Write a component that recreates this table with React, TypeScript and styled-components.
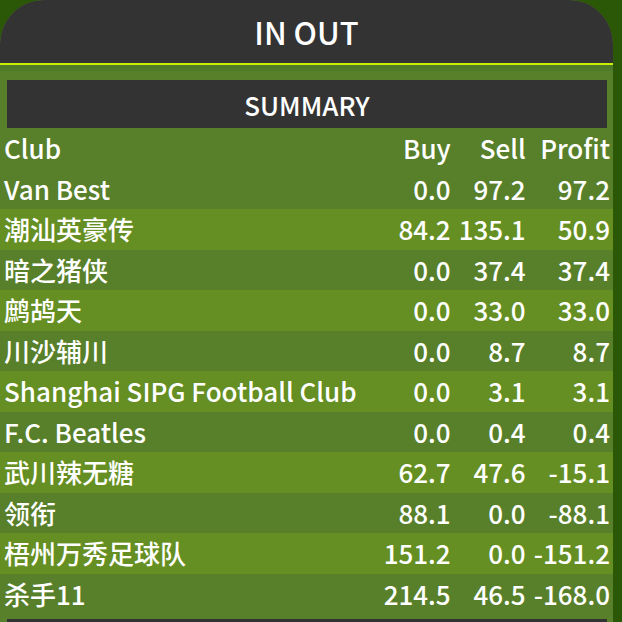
import React from "react";
import styled, { createGlobalStyle } from "styled-components";

const Global = createGlobalStyle`
  html, body { margin: 0; padding: 0; background: #2b5806; }
  body { font-family: "Noto Sans CJK SC", "Noto Sans", sans-serif; color: #fff; }
`;

const Panel = styled.div`
  width: 613px;
  border-radius: 44px 44px 0 0;
  overflow: hidden;
  background: #587f2a;
`;

const Header = styled.div`
  height: 63px;
  background: #333333;
  border-bottom: 2px solid #c8f000;
  display: flex;
  align-items: center;
  justify-content: center;
  font-size: 31px;
  font-weight: 500;
  color: #fff;
`;

const Strip = styled.div`
  height: 6px;
  background: #4e7a29;
`;

const Content = styled.div`
  padding-top: 9px;
`;

const SectionBar = styled.div`
  margin: 0 6px 0 7px;
  height: 48px;
  background: #333333;
  display: flex;
  align-items: center;
  justify-content: center;
  font-size: 26px;
  font-weight: 500;
`;

const Table = styled.table`
  width: 100%;
  border-collapse: collapse;
  margin-bottom: 5px;
`;

const Row = styled.tr<{ $alt?: boolean }>`
  background: ${(p) => (p.$alt ? "#658f22" : "#587f2a")};
  height: 40.5px;
`;

const Cell = styled.td<{ $num?: boolean }>`
  font-size: 26px;
  font-weight: 500;
  line-height: 40px;
  padding: 0 4px;
  white-space: nowrap;
  text-align: ${(p) => (p.$num ? "right" : "left")};
  &:first-child { padding-left: 4px; width: 100%; }
  &:last-child { padding-right: 3px; }
`;

const rows: [string, string, string, string][] = [
  ["Van Best", "0.0", "97.2", "97.2"],
  ["潮汕英豪传", "84.2", "135.1", "50.9"],
  ["暗之猪侠", "0.0", "37.4", "37.4"],
  ["鹧鸪天", "0.0", "33.0", "33.0"],
  ["川沙辅川", "0.0", "8.7", "8.7"],
  ["Shanghai SIPG Football Club", "0.0", "3.1", "3.1"],
  ["F.C. Beatles", "0.0", "0.4", "0.4"],
  ["武川辣无糖", "62.7", "47.6", "-15.1"],
  ["领衔", "88.1", "0.0", "-88.1"],
  ["梧州万秀足球队", "151.2", "0.0", "-151.2"],
  ["杀手11", "214.5", "46.5", "-168.0"],
];

export default function App() {
  return (
    <>
      <Global />
      <Panel>
        <Header>IN OUT</Header>
        <Strip />
        <Content>
          <SectionBar>SUMMARY</SectionBar>
          <Table>
            <tbody>
              <Row>
                <Cell>Club</Cell>
                <Cell $num>Buy</Cell>
                <Cell $num>Sell</Cell>
                <Cell $num>Profit</Cell>
              </Row>
              {rows.map((r, i) => (
                <Row key={r[0]} $alt={i % 2 === 1}>
                  <Cell>{r[0]}</Cell>
                  <Cell $num>{r[1]}</Cell>
                  <Cell $num>{r[2]}</Cell>
                  <Cell $num>{r[3]}</Cell>
                </Row>
              ))}
            </tbody>
          </Table>
          <SectionBar />
        </Content>
      </Panel>
    </>
  );
}
